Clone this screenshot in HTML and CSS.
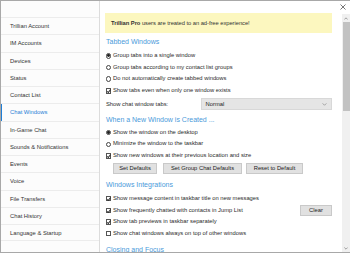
FILE: index.html
```html
<!DOCTYPE html>
<html>
<head>
<meta charset="utf-8">
<link rel="stylesheet" href="styles.css">
</head>
<body>
<div class="window">
  <nav class="sidebar">
    <div class="nav-item">Trillian Account</div>
    <div class="nav-item">IM Accounts</div>
    <div class="nav-item">Devices</div>
    <div class="nav-item">Status</div>
    <div class="nav-item">Contact List</div>
    <div class="nav-item active">Chat Windows</div>
    <div class="nav-item">In-Game Chat</div>
    <div class="nav-item">Sounds &amp; Notifications</div>
    <div class="nav-item">Events</div>
    <div class="nav-item">Voice</div>
    <div class="nav-item">File Transfers</div>
    <div class="nav-item">Chat History</div>
    <div class="nav-item">Language &amp; Startup</div>
  </nav>
  <main class="main">
    <div class="banner"><b>Trillian Pro</b> users are treated to an ad-free experience!</div>

    <div class="heading h1">Tabbed Windows</div>
    <div class="row"><span class="radio on"></span>Group tabs into a single window</div>
    <div class="row"><span class="radio"></span>Group tabs according to my contact list groups</div>
    <div class="row"><span class="radio"></span>Do not automatically create tabbed windows</div>
    <div class="row"><span class="check on"></span>Show tabs even when only one window exists</div>
    <div class="select-row">
      <span class="select-label">Show chat window tabs:</span>
      <div class="select"><span>Normal</span><svg class="chev" viewBox="0 0 6 4" width="5" height="3"><path d="M0.5 0.5 L3 3 L5.5 0.5" fill="none" stroke="#777" stroke-width="0.8"/></svg></div>
    </div>

    <div class="heading h2">When a New Window is Created ...</div>
    <div class="row"><span class="radio on"></span>Show the window on the desktop</div>
    <div class="row"><span class="radio"></span>Minimize the window to the taskbar</div>
    <div class="row"><span class="check on"></span>Show new windows at their previous location and size</div>
    <div class="buttons">
      <div class="btn b1">Set Defaults</div>
      <div class="btn b2">Set Group Chat Defaults</div>
      <div class="btn b3">Reset to Default</div>
    </div>

    <div class="heading h3">Windows Integrations</div>
    <div class="row"><span class="check on"></span>Show message content in taskbar title on new messages</div>
    <div class="row"><span class="check on"></span>Show frequently chatted with contacts in Jump List<div class="btn clear">Clear</div></div>
    <div class="row"><span class="check on"></span>Show tab previews in taskbar separately</div>
    <div class="row"><span class="check"></span>Show chat windows always on top of other windows</div>

    <div class="heading h4">Closing and Focus</div>
  </main>
  <div class="rightcol">
    <svg class="close" viewBox="0 0 6 6" width="6" height="6"><path d="M0.5 0.5 L5.5 5.5 M5.5 0.5 L0.5 5.5" stroke="#666" stroke-width="0.9"/></svg>
    <div class="scrollbar">
      <div class="arrow"><svg viewBox="0 0 6 4" width="4" height="3"><path d="M0.5 3.5 L3 1 L5.5 3.5" fill="none" stroke="#777" stroke-width="1"/></svg></div>
      <div class="thumb"></div>
      <div class="track"></div>
      <div class="arrow"><svg viewBox="0 0 6 4" width="4" height="3"><path d="M0.5 0.5 L3 3 L5.5 0.5" fill="none" stroke="#777" stroke-width="1"/></svg></div>
    </div>
  </div>
</div>
</body>
</html>
```

FILE: styles.css
```css
html, body {
  margin: 0;
  padding: 0;
  background: #ffffff;
}
body {
  width: 350px;
  height: 254px;
  overflow: hidden;
  font-family: "Liberation Sans", Arial, sans-serif;
  font-size: 5.8px;
  color: #2a2a2a;
}
.window {
  box-sizing: border-box;
  width: 350px;
  height: 253px;
  border: 1px solid #a8a8a8;
  border-right: none;
  display: flex;
  overflow: hidden;
}
.sidebar {
  width: 99px;
  flex: none;
  border-right: 1px solid #dcdcdc;
  padding-top: 16px;
  box-sizing: border-box;
  background: #fcfcfc;
}
.nav-item {
  height: 17.25px;
  line-height: 17px;
  padding-left: 9px;
  border-top: 1px solid #ececec;
  box-sizing: border-box;
  color: #333;
  position: relative;
}
.nav-item:last-child {
  border-bottom: 1px solid #ececec;
}
.nav-item.active {
  color: #1f7ed6;
}
.nav-item.active::before {
  content: "";
  position: absolute;
  left: -1px;
  top: 0;
  bottom: 0;
  width: 2px;
  background: #1f7ed6;
}
.main {
  width: 227px;
  flex: none;
  margin-left: 5px;
  padding-top: 12px;
}
.banner {
  height: 20px;
  line-height: 20px;
  background: #fcf7bf;
  padding-left: 6px;
  color: #333;
  letter-spacing: -0.05px;
}
.banner b {
  font-weight: bold;
  color: #333;
}
.heading {
  color: #4a9ada;
  font-size: 7px;
  padding-left: 1px;
}
.h1 { height: 17px; line-height: 17px; }
.h2 { height: 15px; line-height: 15px; }
.h3 { height: 19px; line-height: 21px; }
.h4 { height: 18px; line-height: 19px; }
.row {
  height: 11.7px;
  line-height: 11.7px;
  display: flex;
  align-items: center;
  white-space: nowrap;
}
.radio {
  box-sizing: border-box;
  width: 5.5px;
  height: 5.5px;
  border: 0.7px solid #444;
  border-radius: 50%;
  margin-left: 0.5px;
  margin-right: 2px;
  flex: none;
  display: flex;
  align-items: center;
  justify-content: center;
}
.radio.on::after {
  content: "";
  width: 2.8px;
  height: 2.8px;
  border-radius: 50%;
  background: #222;
}
.check {
  box-sizing: border-box;
  width: 5.5px;
  height: 5.5px;
  border: 0.7px solid #555;
  margin-left: 0.5px;
  margin-right: 2px;
  flex: none;
  position: relative;
}
.check.on::after {
  content: "";
  position: absolute;
  left: 1.4px;
  top: 0.2px;
  width: 1.3px;
  height: 2.6px;
  border-right: 0.7px solid #333;
  border-bottom: 0.7px solid #333;
  transform: rotate(40deg);
}
.select-row {
  height: 15px;
  display: flex;
  align-items: center;
}
.select-label {
  width: 95px;
  padding-left: 1px;
}
.select {
  box-sizing: border-box;
  width: 132px;
  height: 12px;
  background: #e5e5e5;
  border: 1px solid #d8d8d8;
  display: flex;
  align-items: center;
  justify-content: space-between;
  padding: 0 4px 0 4px;
  color: #222;
}
.chev { display: block; }
.buttons {
  display: flex;
  margin-top: 1px;
  padding-left: 8px;
  height: 11px;
}
.btn {
  box-sizing: border-box;
  height: 11px;
  line-height: 9px;
  background: #e1e1e1;
  border: 1px solid #c9c9c9;
  text-align: center;
  color: #222;
}
.b1 { width: 44px; margin-right: 6px; }
.b2 { width: 79px; margin-right: 4px; }
.b3 { width: 57px; }
.clear {
  width: 32px;
  margin-left: auto;
  margin-right: 0;
}
.rightcol {
  flex: 1;
  display: flex;
  flex-direction: column;
  align-items: flex-end;
}
.close {
  display: block;
  margin-top: 3px;
  margin-right: 4px;
}
.scrollbar {
  margin-top: 4px;
  width: 8px;
  height: 238px;
  background: #f0f0f0;
  display: flex;
  flex-direction: column;
}
.arrow {
  height: 8px;
  display: flex;
  align-items: center;
  justify-content: center;
  flex: none;
}
.arrow svg { display: block; }
.thumb {
  height: 89px;
  background: #c2c2c2;
  margin: 0 0.5px;
  flex: none;
}
.track { flex: 1; }
```
